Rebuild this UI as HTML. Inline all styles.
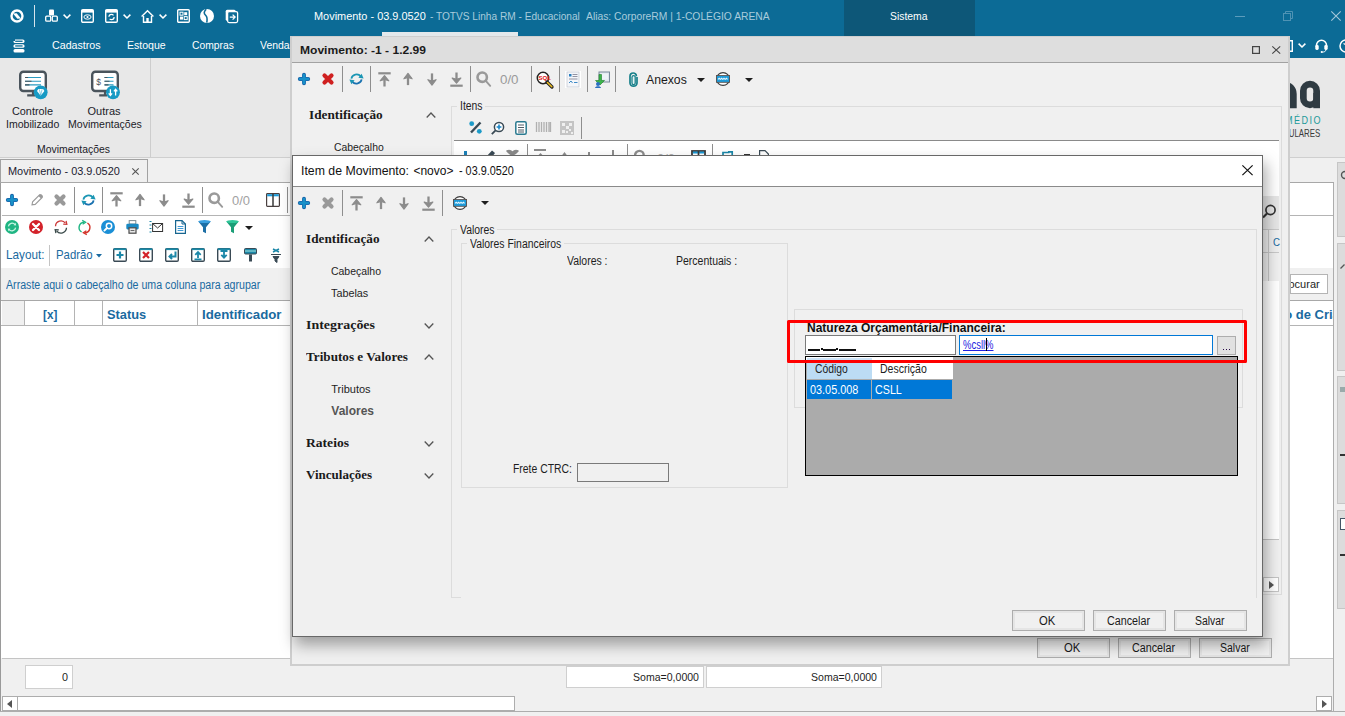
<!DOCTYPE html>
<html><head><meta charset="utf-8"><title>Movimento</title>
<style>
*{box-sizing:border-box;margin:0;padding:0}
html,body{width:1345px;height:716px;overflow:hidden;background:#f0f0f0;font-family:"Liberation Sans",sans-serif;}
body{position:relative}
.a{position:absolute}
.t{position:absolute;white-space:nowrap;transform-origin:0 50%;line-height:16px;height:16px;font-family:"Liberation Sans",sans-serif;}
svg{position:absolute;overflow:visible}
.sep{position:absolute;width:1px;background:#8e8e8e}
.btn{position:absolute;border:1px solid #adadad;background:#f0f0f0;box-shadow:inset 0 0 0 2px #e5e5e5}
.gb{position:absolute;border:1px solid #dcdcdc}
</style></head><body>
<div class="a" style="left:0px;top:0px;width:1345px;height:58px;background:#0c6b96;"></div><div class="a" style="left:844px;top:0px;width:131px;height:36px;background:#0d5778;"></div><div class="a" style="left:382px;top:32px;width:136px;height:4px;background:#e4e9ec;"></div><svg style="left:10px;top:9px" width="14" height="14" viewBox="0 0 14 14"><circle cx="7" cy="7" r="5.500" fill="none" stroke="#fff" stroke-width="2.400"/><path d="M3 4.600l3.600-0.400 4.400 5.200-3.600 0.400z" fill="#fff"/></svg><div class="sep" style="left:34px;top:5px;height:22px;background:#d6e4ec"></div><svg style="left:45px;top:9px" width="13" height="13" viewBox="0 0 13 13"><rect x="4" y="0.5" width="5" height="6" rx="1" fill="#fff"/><rect x="0.7" y="7.2" width="5" height="5" rx="1" fill="none" stroke="#fff" stroke-width="1.3"/><rect x="7.3" y="7.2" width="5" height="5" rx="1" fill="none" stroke="#fff" stroke-width="1.3"/></svg><svg style="left:62.5px;top:13.5px" width="8" height="5" viewBox="0 0 8 5"><path d="M0.6 0.6L4 4l3.4-3.4" fill="none" stroke="#fff" stroke-width="1.5"/></svg><svg style="left:81px;top:9px" width="13" height="14" viewBox="0 0 13 14"><rect x="0.7" y="0.7" width="11.6" height="12.6" rx="1.2" fill="none" stroke="#fff" stroke-width="1.4"/><path d="M0.700 2.200h11.600" stroke="#fff" stroke-width="2.800"/><ellipse cx="6.5" cy="8" rx="3.6" ry="2.2" fill="none" stroke="#fff" stroke-width="1"/><circle cx="6.5" cy="8" r="1.1" fill="#fff"/></svg><svg style="left:105px;top:9px" width="13" height="14" viewBox="0 0 13 14"><rect x="0.7" y="0.7" width="11.6" height="12.6" rx="1.2" fill="none" stroke="#fff" stroke-width="1.4"/><path d="M0.700 2.200h11.600" stroke="#fff" stroke-width="2.800"/><circle cx="6.5" cy="8" r="2.6" fill="none" stroke="#fff" stroke-width="1.2" stroke-dasharray="6 2.2"/></svg><svg style="left:122.5px;top:13.5px" width="8" height="5" viewBox="0 0 8 5"><path d="M0.6 0.6L4 4l3.4-3.4" fill="none" stroke="#fff" stroke-width="1.5"/></svg><svg style="left:141px;top:9.5px" width="13" height="13" viewBox="0 0 13 13"><path d="M0.6 6.6L6.5 0.8l5.9 5.8" fill="none" stroke="#fff" stroke-width="1.4"/><path d="M2.5 6v6.3h8V6" fill="none" stroke="#fff" stroke-width="1.4"/><rect x="5.3" y="8" width="2.4" height="4.3" fill="#fff"/></svg><svg style="left:158.8px;top:13.5px" width="8" height="5" viewBox="0 0 8 5"><path d="M0.6 0.6L4 4l3.4-3.4" fill="none" stroke="#fff" stroke-width="1.5"/></svg><svg style="left:177px;top:9px" width="13" height="14" viewBox="0 0 13 14"><rect x="0.7" y="0.7" width="11.6" height="12.6" rx="1" fill="none" stroke="#fff" stroke-width="1.4"/><rect x="3" y="3.2" width="3" height="3" fill="none" stroke="#fff" stroke-width="1"/><rect x="7.2" y="3.2" width="3" height="3" fill="#fff"/><rect x="3" y="7.6" width="3" height="3" fill="#fff"/><rect x="7.2" y="7.6" width="3" height="3" fill="none" stroke="#fff" stroke-width="1"/></svg><svg style="left:200px;top:9px" width="14" height="14" viewBox="0 0 14 14"><circle cx="7" cy="7" r="7" fill="#fff"/><path d="M6.2 0.3c-2.5 2.5-2.6 4.2-0.4 6.2 1.6 1.4 1.6 3.6 1 7.2" fill="none" stroke="#0c6b96" stroke-width="1.6"/></svg><svg style="left:225px;top:9px" width="13" height="14" viewBox="0 0 13 14"><rect x="0.7" y="0.7" width="10" height="11" rx="1.5" fill="#fff"/><rect x="2.6" y="2.6" width="10" height="11" rx="1.5" fill="#0c6b96" stroke="#fff" stroke-width="1.3"/><path d="M4.8 8.1h5M7.6 5.6l2.5 2.5-2.5 2.5" fill="none" stroke="#fff" stroke-width="1.3"/></svg><span class="t" style="left:313.75px;top:7.50px;font-size:11px;color:#fff;transform:scaleX(0.9932);">Movimento - 03.9.0520</span><span class="t" style="left:429.50px;top:7.50px;font-size:11px;color:#a9cbdc;transform:scaleX(0.9199);">- TOTVS Linha RM - Educacional</span><span class="t" style="left:586.30px;top:7.50px;font-size:11px;color:#a9cbdc;transform:scaleX(0.9371);">Alias: CorporeRM | 1-COLÉGIO ARENA</span><span class="t" style="left:890.00px;top:7.60px;font-size:11px;color:#fff;transform:scaleX(0.9434);">Sistema</span><svg style="left:1235px;top:15.5px" width="10" height="1" viewBox="0 0 10 1"><rect width="10" height="1" fill="#5c9cbc"/></svg><svg style="left:1283px;top:11px" width="10" height="10" viewBox="0 0 10 10"><rect x="0.5" y="2.5" width="7" height="7" fill="none" stroke="#4f93b4" stroke-width="1"/><path d="M2.5 2.5v-2h7v7h-2" fill="none" stroke="#4f93b4" stroke-width="1"/></svg><svg style="left:1331px;top:11px" width="10" height="10" viewBox="0 0 10 10"><path d="M0.3 0.3l9.4 9.4M9.7 0.3L0.3 9.7" stroke="#a5c7d9" stroke-width="1.1"/></svg><svg style="left:13px;top:39px" width="12" height="14" viewBox="0 0 12 14"><rect x="0.5" y="0.5" width="11" height="3.6" rx="1.6" fill="#fff"/><rect x="0.5" y="5.2" width="11" height="3.6" rx="1.6" fill="#fff"/><rect x="0.5" y="9.9" width="11" height="3.6" rx="1.6" fill="#fff"/><rect x="2.2" y="1.6" width="7.4" height="1.3" fill="#0c6b96"/><rect x="2.2" y="6.3" width="7.4" height="1.3" fill="#0c6b96"/><rect x="0" y="0" width="2" height="2" fill="#0c6b96"/></svg><span class="t" style="left:52.00px;top:37.30px;font-size:11px;color:#fff;transform:scaleX(0.9693);">Cadastros</span><span class="t" style="left:126.50px;top:37.30px;font-size:11px;color:#fff;transform:scaleX(0.9585);">Estoque</span><span class="t" style="left:192.00px;top:37.30px;font-size:11px;color:#fff;transform:scaleX(0.9367);">Compras</span><span class="t" style="left:260.00px;top:37.30px;font-size:11px;color:#fff;transform:scaleX(0.9481);">Vendas</span><svg style="left:1289px;top:40px" width="5" height="12" viewBox="0 0 5 12"><path d="M0 0.7h3.3v10.6H0" fill="none" stroke="#fff" stroke-width="1.4"/></svg><svg style="left:1297.5px;top:43px" width="8" height="5" viewBox="0 0 8 5"><path d="M0.6 0.6L4 4l3.4-3.4" fill="none" stroke="#fff" stroke-width="1.5"/></svg><svg style="left:1315px;top:38.5px" width="13" height="14" viewBox="0 0 13 14"><path d="M1.5 8V6.3a5 5 0 0 1 10 0V8" fill="none" stroke="#fff" stroke-width="1.6"/><rect x="0.3" y="6" width="3.4" height="5" rx="1.4" fill="#fff"/><rect x="9.3" y="6" width="3.4" height="5" rx="1.4" fill="#fff"/><path d="M11 10.5c0 2-2 2.6-4 2.6" fill="none" stroke="#fff" stroke-width="1"/><circle cx="6.7" cy="13" r="1" fill="#fff"/></svg><svg style="left:1339px;top:38.5px" width="14" height="14" viewBox="0 0 14 14"><circle cx="7" cy="7" r="6" fill="none" stroke="#fff" stroke-width="1.5"/><path d="M4.5 4.5l2 1" stroke="#fff" stroke-width="1.2"/></svg><div class="a" style="left:0px;top:58px;width:1345px;height:99px;background:#e8e8e8;"></div><div class="a" style="left:0px;top:157px;width:1345px;height:1px;background:#cfcfcf;"></div><div class="sep" style="left:150px;top:58px;height:99px;background:#cdcdcd"></div><svg style="left:19px;top:69.5px" width="31" height="31" viewBox="0 0 31 31"><rect x="1.200" y="1.700" width="25.600" height="19.300" rx="3.200" fill="#fff" stroke="#4a545c" stroke-width="2.400"/><path d="M14 21.500v3.600M8.200 25.400h8" stroke="#4a545c" stroke-width="2.200"/><path d="M6 7.500h16M6 11.200h16M6 14.900h16" stroke="#2a9ac0" stroke-width="1.100"/><path d="M6 7.500h3M6 11.200h6.500M6 14.900h4.500" stroke="#4a545c" stroke-width="1.100"/><circle cx="21.700" cy="22.300" r="6.900" fill="#169ac4"/><path d="M18 21h7.400l-3.700 4.800z" fill="#fff"/><path d="M18 21l1.300-1.900h4.800l1.300 1.900z" fill="#fff"/><path d="M20.300 19.300l1.400 6M23.100 19.300l-1.400 6" stroke="#169ac4" stroke-width="0.500"/></svg><svg style="left:90.7px;top:69.5px" width="31" height="31" viewBox="0 0 31 31"><rect x="1.200" y="1.700" width="25.600" height="19.300" rx="3.200" fill="#fff" stroke="#4a545c" stroke-width="2.400"/><path d="M14 21.500v3.600M8.200 25.400h8" stroke="#4a545c" stroke-width="2.200"/><path d="M13.500 7.500h9M13.500 11.200h9M13.500 14.900h9" stroke="#2a9ac0" stroke-width="1.100"/><path d="M13.500 7.500h3M13.500 11.200h5M13.500 14.900h4" stroke="#4a545c" stroke-width="1.100"/><text x="5.300" y="14.500" font-family="Liberation Sans" font-size="8.500" fill="#4a545c">$</text><circle cx="22" cy="22.300" r="6.900" fill="#169ac4"/><path d="M19.400 19.300v6M17.700 23.400l1.700 2 1.700-2M24.600 25.400v-6M22.900 21.300l1.700-2 1.700 2" fill="none" stroke="#fff" stroke-width="1.300"/></svg><span class="t" style="left:12.00px;top:103.30px;font-size:11px;color:#1c1c28;transform:scaleX(0.9861);">Controle</span><span class="t" style="left:6.00px;top:116.30px;font-size:11px;color:#1c1c28;transform:scaleX(0.9579);">Imobilizado</span><span class="t" style="left:87.50px;top:103.30px;font-size:11px;color:#1c1c28;">Outras</span><span class="t" style="left:67.50px;top:116.30px;font-size:11px;color:#1c1c28;transform:scaleX(0.9579);">Movimentações</span><span class="t" style="left:37.00px;top:141.30px;font-size:11px;color:#1c1c28;transform:scaleX(0.9475);">Movimentações</span><svg style="left:1260px;top:75px" width="70" height="40" viewBox="0 0 70 40"><path d="M15 33.200V19a9.100 9.100 0 0 1 18.200 0V33.200" fill="none" stroke="#2f3b42" stroke-width="7"/><rect x="43.350" y="9.150" width="13.300" height="20.700" rx="6.650" fill="none" stroke="#2f3b42" stroke-width="6.700"/><rect x="53.300" y="18" width="6.700" height="15.200" fill="#2f3b42"/></svg><span class="t" style="left:1284.50px;top:111.60px;font-size:11px;color:#1a9a9a;transform:scaleX(0.8211);letter-spacing:1.800px;">MÉDIO</span><span class="t" style="left:1283.00px;top:124.50px;font-size:10.5px;color:#3a3a3a;transform:scaleX(0.7519);">CULARES</span><div class="a" style="left:0px;top:158px;width:1345px;height:25px;background:#f0f0f0;"></div><div class="a" style="left:0px;top:159px;width:148px;height:24px;background:#f0f0f0;border:1.300px solid #a2a2a2;border-bottom:none;"></div><div class="a" style="left:0px;top:182px;width:1334px;height:1.6px;background:#a8a8a8;"></div><span class="t" style="left:7.50px;top:163.00px;font-size:11px;color:#1c1c30;transform:scaleX(0.9936);">Movimento - 03.9.0520</span><svg style="left:131.5px;top:167.8px" width="7" height="7" viewBox="0 0 7 7"><path d="M0.300 0.300l6.400 6.400M6.700 0.300L0.300 6.700" stroke="#555" stroke-width="1.100"/></svg><div class="a" style="left:0px;top:183px;width:1334px;height:475px;background:#fff;"></div><div class="a" style="left:0px;top:183px;width:1.3px;height:528px;background:#9a9a9a;"></div><div class="a" style="left:1333px;top:183px;width:1px;height:529px;background:#adadad;"></div><svg style="left:6px;top:194px" width="12" height="12" viewBox="0 0 12 12"><path d="M6 1.800v8.400M1.800 6h8.400" stroke="#1a62a8" stroke-width="3.900" stroke-linecap="round"/><path d="M6 2v8M2 6h8" stroke="#1890c8" stroke-width="2.700" stroke-linecap="round"/></svg><svg style="left:30.5px;top:193px" width="13" height="13" viewBox="0 0 13 13"><path d="M1 11.800l0.600-3L8.600 1.800l2.600 2.600-7 7z" fill="#fff" stroke="#9a9a9a" stroke-width="1.100"/><path d="M7.400 3l2.600 2.600 1.800-1.800a0.800 0.800 0 0 0 0-1.100L10.300 1.200a0.800 0.800 0 0 0-1.100 0z" fill="#9a9a9a"/></svg><svg style="left:54px;top:194px" width="12" height="12" viewBox="0 0 12 12"><path d="M2.500 2.500l7 7M9.500 2.500l-7 7" stroke="#999999" stroke-width="4.200" stroke-linecap="round"/></svg><div class="sep" style="left:74px;top:187px;height:26px;background:#8e8e8e"></div><svg style="left:80.5px;top:194px" width="15" height="12" viewBox="0 0 15 12"><path d="M2.400 5.600A5.200 4.600 0 0 1 11.800 3.400" fill="none" stroke="#1b96b4" stroke-width="1.700"/><path d="M12.600 6.400A5.200 4.600 0 0 1 3.200 8.600" fill="none" stroke="#1a72b0" stroke-width="1.700"/><path d="M9.400 4.800l5.200 0.600-2-4.600z" fill="#1b96b4"/><path d="M5.600 7.200l-5.200-0.600 2 4.600z" fill="#1b96b4"/></svg><div class="sep" style="left:102px;top:187px;height:26px;background:#8e8e8e"></div><svg style="left:109.5px;top:192px" width="13" height="15" viewBox="0 0 13 15"><path d="M0.300 1.300h12.400" stroke="#8c8c8c" stroke-width="2.200"/><path d="M6.500 6v8.500" stroke="#8c8c8c" stroke-width="2.300"/><path d="M6.500 3.600l4.300 5.200-4.300-1.300-4.300 1.300z" fill="#8c8c8c" stroke="#8c8c8c" stroke-width="1.200" stroke-linejoin="round"/></svg><svg style="left:135.3px;top:192.5px" width="10" height="15" viewBox="0 0 10 15"><path d="M5 3.500v9.600" stroke="#8c8c8c" stroke-width="2.300"/><path d="M5 1.400l4.100 5.400-4.100-1.400-4.100 1.400z" fill="#8c8c8c" stroke="#8c8c8c" stroke-width="1.200" stroke-linejoin="round"/></svg><svg style="left:158.7px;top:193px" width="10" height="15" viewBox="0 0 10 15"><path d="M5 1.400v9.600" stroke="#8c8c8c" stroke-width="2.300"/><path d="M5 13.100l4.100-5.400-4.100 1.400-4.100-1.400z" fill="#8c8c8c" stroke="#8c8c8c" stroke-width="1.200" stroke-linejoin="round"/></svg><svg style="left:181.7px;top:193px" width="13" height="15" viewBox="0 0 13 15"><path d="M0.300 13.700h12.400" stroke="#8c8c8c" stroke-width="2.200"/><path d="M6.500 0.500v8.500" stroke="#8c8c8c" stroke-width="2.300"/><path d="M6.500 11.200l4.300-5.200-4.300 1.300-4.300-1.300z" fill="#8c8c8c" stroke="#8c8c8c" stroke-width="1.200" stroke-linejoin="round"/></svg><div class="sep" style="left:202px;top:187px;height:26px;background:#8e8e8e"></div><svg style="left:208.3px;top:192px" width="15" height="16" viewBox="0 0 15 16"><circle cx="6.200" cy="6.200" r="4.700" fill="none" stroke="#9a9a9a" stroke-width="2.600"/><path d="M9.800 9.800l4.400 5" stroke="#9a9a9a" stroke-width="1.900" stroke-linecap="round"/></svg><span class="t" style="left:232.00px;top:193.30px;font-size:13.5px;color:#a2a2a2;transform:scaleX(0.9584);">0/0</span><svg style="left:266px;top:193px" width="14" height="14" viewBox="0 0 14 14"><rect x="0.600" y="0.600" width="12.800" height="12.800" rx="0.800" fill="#fff" stroke="#4a4040" stroke-width="1.200"/><rect x="1.200" y="1.200" width="11.600" height="2.100" fill="#1b9ad8"/><path d="M7 0.600v12.800" stroke="#3a3a3a" stroke-width="1.500"/></svg><div class="sep" style="left:287px;top:187px;height:26px;background:#8e8e8e"></div><div class="a" style="left:2px;top:215px;width:1331px;height:1px;background:#b4b4b4;"></div><svg style="left:5px;top:220.3px" width="14" height="14" viewBox="0 0 14 14"><circle cx="7" cy="7" r="7" fill="#1fb583"/><path d="M3.4 6.4A3.7 3.7 0 0 1 10 4.6M10.6 7.6A3.7 3.7 0 0 1 4 9.4" fill="none" stroke="#c8f5e4" stroke-width="1.3"/><path d="M8.6 5.2l2.6 0.2-0.6-2.6zM5.4 8.8l-2.6-0.2 0.6 2.6z" fill="#c8f5e4"/></svg><svg style="left:28.8px;top:220.3px" width="14" height="14" viewBox="0 0 14 14"><circle cx="7" cy="7" r="7" fill="#d3222a"/><path d="M4 4l6 6M10 4l-6 6" stroke="#fff" stroke-width="2.3" stroke-linecap="round"/></svg><svg style="left:54px;top:220.3px" width="14" height="14" viewBox="0 0 14 14"><path d="M1.500 6.200A5.500 5.500 0 0 1 11.400 3.200" fill="none" stroke="#cc3a3a" stroke-width="1.300"/><path d="M12.500 7.800A5.500 5.500 0 0 1 2.600 10.800" fill="none" stroke="#3a4a4a" stroke-width="1.300"/><path d="M9.200 4.200l3.600 0.200-0.700-3.500" fill="none" stroke="#cc3a3a" stroke-width="1.300"/><path d="M4.800 9.800l-3.600-0.200 0.700 3.500" fill="none" stroke="#3a4a4a" stroke-width="1.300"/></svg><svg style="left:77.5px;top:219.8px" width="13" height="15" viewBox="0 0 13 15"><path d="M6 2.200A5.300 5.300 0 0 0 3.600 12" fill="none" stroke="#1fb583" stroke-width="1.400"/><path d="M7 12.800A5.300 5.300 0 0 0 9.400 3" fill="none" stroke="#d3342a" stroke-width="1.400"/><path d="M4.200 0.400l3.400 1.800-3 2" fill="none" stroke="#1fb583" stroke-width="1.300"/><path d="M8.800 14.600l-3.400-1.800 3-2" fill="none" stroke="#d3342a" stroke-width="1.300"/></svg><svg style="left:100.8px;top:220.3px" width="14" height="14" viewBox="0 0 14 14"><circle cx="7" cy="7" r="7" fill="#1a8fd6"/><circle cx="8" cy="6" r="2.7" fill="none" stroke="#fff" stroke-width="1.5"/><path d="M6 8l-2.600 2.600" stroke="#fff" stroke-width="1.900" stroke-linecap="round"/></svg><svg style="left:125.5px;top:220.3px" width="13" height="14" viewBox="0 0 13 14"><rect x="3.200" y="0.600" width="6.600" height="3.400" fill="#fff" stroke="#7a8a92" stroke-width="1"/><rect x="0.300" y="3.800" width="12.400" height="5.600" rx="1.300" fill="#1a8ac4"/><rect x="3" y="7.800" width="7" height="5.400" fill="#e8e8e8" stroke="#4a4a4a" stroke-width="1.200"/><path d="M4.600 10.500h3.800" stroke="#4a4a4a" stroke-width="0.800"/></svg><svg style="left:148.8px;top:221.3px" width="14" height="12" viewBox="0 0 14 12"><rect x="3.600" y="2.500" width="10" height="8" fill="#fff" stroke="#333" stroke-width="1"/><path d="M3.600 2.500l5 4.500 5-4.500" fill="none" stroke="#333" stroke-width="1"/><path d="M0.500 0.500h2M0.500 4h2M0.500 7.500h2M0.500 11h2" stroke="#1b87a8" stroke-width="1"/></svg><svg style="left:174.5px;top:220.3px" width="11" height="14" viewBox="0 0 11 14"><path d="M0.600 0.600h6.400l3.400 3.400v9.400H0.600z" fill="#fff" stroke="#17658f" stroke-width="1.200"/><path d="M7 0.600v3.400h3.400" fill="none" stroke="#17658f" stroke-width="1"/><path d="M2.600 6.500h5.800M2.600 8.500h5.800M2.600 10.500h5.800" stroke="#2a8fd0" stroke-width="0.900"/></svg><svg style="left:197.5px;top:220.3px" width="13" height="14" viewBox="0 0 13 14"><path d="M0.300 1.500h12.400L8 7.300v6l-3-1.500V7.300z" fill="#1d6fa5"/><ellipse cx="6.500" cy="1.600" rx="6.200" ry="1.500" fill="#3aa0e0"/></svg><svg style="left:225.5px;top:220.3px" width="13" height="14" viewBox="0 0 13 14"><path d="M0.300 1.500h12.400L8 7.300v6l-3-1.500V7.300z" fill="#1b9e77"/><ellipse cx="6.500" cy="1.600" rx="6.200" ry="1.500" fill="#2fc79a"/></svg><svg style="left:245px;top:225.8px" width="8" height="4" viewBox="0 0 8 4"><path d="M0 0h8L4 4z" fill="#1e1e1e"/></svg><span class="t" style="left:5.50px;top:247.30px;font-size:13px;color:#1a6aa0;transform:scaleX(0.9026);">Layout:</span><div class="sep" style="left:49px;top:245px;height:21px;background:#c4c4c4"></div><span class="t" style="left:56.00px;top:247.30px;font-size:13px;color:#1a6aa0;transform:scaleX(0.8754);">Padrão</span><svg style="left:96px;top:253.5px" width="6" height="3.5" viewBox="0 0 6 3.5"><path d="M0 0h6L3 3.500z" fill="#1a6aa0"/></svg><svg style="left:113px;top:248px" width="14" height="14" viewBox="0 0 14 14"><rect x="0.700" y="0.700" width="12.600" height="12.600" rx="1.200" fill="#fff" stroke="#3a4a55" stroke-width="1.400"/><path d="M0.700 1.200h12.600" stroke="#1b8aa8" stroke-width="1.800"/><path d="M7 3.500v7M3.500 7h7" stroke="#1b87a8" stroke-width="2.200"/></svg><svg style="left:139px;top:248px" width="14" height="14" viewBox="0 0 14 14"><rect x="0.700" y="0.700" width="12.600" height="12.600" rx="1.200" fill="#fff" stroke="#3a4a55" stroke-width="1.400"/><path d="M0.700 1.200h12.600" stroke="#1b8aa8" stroke-width="1.800"/><path d="M4 4l6 6M10 4l-6 6" stroke="#d3222a" stroke-width="2.200"/></svg><svg style="left:165px;top:248px" width="14" height="14" viewBox="0 0 14 14"><rect x="0.700" y="0.700" width="12.600" height="12.600" rx="1.200" fill="#fff" stroke="#3a4a55" stroke-width="1.400"/><path d="M0.700 1.200h12.600" stroke="#1b8aa8" stroke-width="1.800"/><path d="M10.500 3.500v5H5M7 6l-2.500 2.500L7 11" fill="none" stroke="#1b87a8" stroke-width="2"/></svg><svg style="left:191px;top:248px" width="14" height="14" viewBox="0 0 14 14"><rect x="0.700" y="0.700" width="12.600" height="12.600" rx="1.200" fill="#fff" stroke="#3a4a55" stroke-width="1.400"/><path d="M0.700 1.200h12.600" stroke="#1b8aa8" stroke-width="1.800"/><path d="M7 10V4.500M4.300 6.800L7 4l2.700 2.800M3.500 11.300h7" fill="none" stroke="#1b87a8" stroke-width="1.800"/></svg><svg style="left:217px;top:248px" width="14" height="14" viewBox="0 0 14 14"><rect x="0.700" y="0.700" width="12.600" height="12.600" rx="1.200" fill="#fff" stroke="#3a4a55" stroke-width="1.400"/><path d="M0.700 1.200h12.600" stroke="#1b8aa8" stroke-width="1.800"/><path d="M7 3.500V9M4.300 6.800L7 9.600l2.700-2.800M3.500 3h7" fill="none" stroke="#1b87a8" stroke-width="1.800"/></svg><svg style="left:243.5px;top:248px" width="13" height="14" viewBox="0 0 13 14"><rect x="0.500" y="0.500" width="12" height="5.500" rx="1" fill="#1b87a8" stroke="#3a4a55" stroke-width="1"/><path d="M1 3h11" stroke="#cfe" stroke-width="0.800"/><rect x="5" y="6.500" width="3" height="7" fill="#3a4a55"/></svg><svg style="left:271px;top:247.5px" width="10" height="15" viewBox="0 0 10 15"><path d="M2 1l6 3M8 1L2 4" stroke="#1b87a8" stroke-width="1.600"/><path d="M0 6.500h10M2 8.500h6l-2 3v3l-2-1.500v-1.500z" fill="#3a4a55" stroke="#3a4a55" stroke-width="1"/></svg><div class="a" style="left:1px;top:268px;width:1332px;height:32px;background:#f0f0f0;"></div><span class="t" style="left:6.00px;top:277.30px;font-size:12px;color:#1a6aa0;transform:scaleX(0.8865);">Arraste aqui o cabeçalho de uma coluna para agrupar</span><div class="a" style="left:1px;top:300px;width:1332px;height:1px;background:#a8a8a8;"></div><div class="a" style="left:1px;top:325px;width:1332px;height:1px;background:#b4b4b4;"></div><div class="a" style="left:2px;top:301px;width:22px;height:24px;background:#f0f0f0;"></div><div class="sep" style="left:24px;top:301px;height:24px;background:#b4b4b4"></div><div class="sep" style="left:74px;top:301px;height:24px;background:#b4b4b4"></div><div class="sep" style="left:102px;top:301px;height:24px;background:#b4b4b4"></div><div class="sep" style="left:197px;top:301px;height:24px;background:#b4b4b4"></div><span class="t" style="left:43.00px;top:307.30px;font-size:13px;font-weight:700;color:#1a6aa0;transform:scaleX(0.8999);">[x]</span><span class="t" style="left:106.80px;top:307.30px;font-size:13px;font-weight:700;color:#1a6aa0;transform:scaleX(0.9866);">Status</span><span class="t" style="left:202.00px;top:307.30px;font-size:13px;font-weight:700;color:#1a6aa0;transform:scaleX(1.0190);">Identificador</span><div class="a" style="left:1290px;top:301px;width:43px;height:24px;overflow:hidden"><span class="t" style="left:-13.00px;top:6.30px;font-size:13px;font-weight:700;color:#1a6aa0;">ão de Criação</span></div><div class="a" style="left:1290px;top:274px;width:38px;height:19.5px;background:#fff;border:1px solid #b4b4b4;"></div><div class="a" style="left:1291px;top:275px;width:36px;height:18px;overflow:hidden"><span class="t" style="left:-13.50px;top:1.30px;font-size:11px;color:#1e1e1e;">Procurar</span></div><div class="a" style="left:2px;top:658px;width:1331px;height:1px;background:#c4c4c4;"></div><div class="a" style="left:2px;top:659px;width:1331px;height:52px;background:#f0f0f0;"></div><div class="a" style="left:25px;top:665px;width:48px;height:24px;background:#fff;border:1px solid #cfcfcf;"></div><span class="t" style="left:62.00px;top:669.00px;font-size:11px;color:#1e1e1e;transform:scaleX(0.9796);">0</span><div class="a" style="left:566px;top:666px;width:138px;height:22px;background:#fff;border:1px solid #cfcfcf;"></div><div class="a" style="left:706px;top:666px;width:176px;height:22px;background:#fff;border:1px solid #cfcfcf;"></div><span class="t" style="left:633.00px;top:669.00px;font-size:11px;color:#1e1e1e;transform:scaleX(0.9591);">Soma=0,0000</span><span class="t" style="left:811.00px;top:669.00px;font-size:11px;color:#1e1e1e;transform:scaleX(0.9591);">Soma=0,0000</span><div class="a" style="left:2px;top:696px;width:1331px;height:15px;background:#f0f0f0;"></div><div class="a" style="left:2px;top:696px;width:16px;height:15px;background:#fff;border:1px solid #adadad;"></div><svg style="left:7px;top:700px" width="5" height="8" viewBox="0 0 5 8"><path d="M5 0v8L0 4z" fill="#555"/></svg><div class="a" style="left:17px;top:696px;width:498px;height:15px;background:#fff;border:1px solid #adadad;"></div><div class="a" style="left:1316px;top:696px;width:16px;height:15px;background:#fff;border:1px solid #adadad;"></div><svg style="left:1322px;top:700px" width="5" height="8" viewBox="0 0 5 8"><path d="M0 0v8l5-4z" fill="#555"/></svg><div class="a" style="left:0px;top:711px;width:1345px;height:1px;background:#adadad;"></div><div class="a" style="left:1337px;top:162px;width:9px;height:75px;background:#dcdcdc;border:1px solid #c6c6c6;"></div><div class="a" style="left:1337px;top:243px;width:9px;height:128px;background:#dcdcdc;border:1px solid #c6c6c6;"></div><div class="a" style="left:1337px;top:376px;width:9px;height:128px;background:#dcdcdc;border:1px solid #c6c6c6;"></div><div class="a" style="left:1337px;top:509.5px;width:9px;height:99.0px;background:#dcdcdc;border:1px solid #c6c6c6;"></div><svg style="left:1340px;top:170px" width="8" height="10" viewBox="0 0 8 10"><circle cx="5" cy="5" r="3.500" fill="none" stroke="#555" stroke-width="1.400"/></svg><svg style="left:1340px;top:263px" width="6" height="6" viewBox="0 0 6 6"><path d="M0.500 5.500l4-4" stroke="#555" stroke-width="1.200"/></svg><div class="a" style="left:1340px;top:387px;width:5px;height:5px;background:#9aa;"></div><div class="a" style="left:1340px;top:454px;width:5px;height:1.5px;background:#333;"></div><div class="a" style="left:1340px;top:518px;width:6px;height:12px;background:#fff;border:1px solid #456;"></div><div class="a" style="left:1340px;top:554px;width:5px;height:1.5px;background:#333;"></div><div class="a" style="left:290px;top:36px;width:1000px;height:630px;background:#f0f0f0;border:2px solid #cecece;border-top:1px solid #cfcfcf"></div><div class="a" style="left:292px;top:37px;width:996px;height:25px;background:#dedede;"></div><div class="a" style="left:292px;top:61.5px;width:996px;height:1.5px;background:#a2a2a2;"></div><span class="t" style="left:299.50px;top:42.00px;font-size:11px;font-weight:700;color:#1a1a1a;transform:scaleX(1.0964);">Movimento: -1 - 1.2.99</span><svg style="left:1252px;top:46px" width="8" height="8" viewBox="0 0 8 8"><rect x="0.600" y="0.600" width="6.800" height="6.800" fill="none" stroke="#444" stroke-width="1.200"/></svg><svg style="left:1272px;top:46px" width="8.5" height="8" viewBox="0 0 8.5 8"><path d="M0.300 0.300l7.900 7.400M8.200 0.300L0.300 7.700" stroke="#444" stroke-width="1.100"/></svg><svg style="left:298px;top:73px" width="12" height="12" viewBox="0 0 12 12"><path d="M6 1.800v8.400M1.800 6h8.400" stroke="#1a62a8" stroke-width="3.900" stroke-linecap="round"/><path d="M6 2v8M2 6h8" stroke="#1890c8" stroke-width="2.700" stroke-linecap="round"/></svg><svg style="left:321.5px;top:73px" width="12" height="12" viewBox="0 0 12 12"><path d="M2.500 2.500l7 7M9.500 2.500l-7 7" stroke="#cf2020" stroke-width="4.200" stroke-linecap="round"/></svg><div class="sep" style="left:342px;top:66px;height:26px;background:#8e8e8e"></div><svg style="left:348.5px;top:72.5px" width="15" height="12" viewBox="0 0 15 12"><path d="M2.400 5.600A5.200 4.600 0 0 1 11.800 3.400" fill="none" stroke="#1b96b4" stroke-width="1.700"/><path d="M12.600 6.400A5.200 4.600 0 0 1 3.200 8.600" fill="none" stroke="#1a72b0" stroke-width="1.700"/><path d="M9.400 4.800l5.200 0.600-2-4.600z" fill="#1b96b4"/><path d="M5.600 7.200l-5.200-0.600 2 4.600z" fill="#1b96b4"/></svg><div class="sep" style="left:370px;top:66px;height:26px;background:#8e8e8e"></div><svg style="left:378px;top:72px" width="13" height="15" viewBox="0 0 13 15"><path d="M0.300 1.300h12.400" stroke="#8c8c8c" stroke-width="2.200"/><path d="M6.500 6v8.500" stroke="#8c8c8c" stroke-width="2.300"/><path d="M6.500 3.600l4.300 5.200-4.300-1.300-4.300 1.300z" fill="#8c8c8c" stroke="#8c8c8c" stroke-width="1.200" stroke-linejoin="round"/></svg><svg style="left:403.3px;top:72px" width="10" height="15" viewBox="0 0 10 15"><path d="M5 3.500v9.600" stroke="#8c8c8c" stroke-width="2.300"/><path d="M5 1.400l4.100 5.400-4.100-1.400-4.100 1.400z" fill="#8c8c8c" stroke="#8c8c8c" stroke-width="1.200" stroke-linejoin="round"/></svg><svg style="left:427.3px;top:72px" width="10" height="15" viewBox="0 0 10 15"><path d="M5 1.400v9.600" stroke="#8c8c8c" stroke-width="2.300"/><path d="M5 13.100l4.100-5.400-4.100 1.400-4.100-1.400z" fill="#8c8c8c" stroke="#8c8c8c" stroke-width="1.200" stroke-linejoin="round"/></svg><svg style="left:449.5px;top:72px" width="13" height="15" viewBox="0 0 13 15"><path d="M0.300 13.700h12.400" stroke="#8c8c8c" stroke-width="2.200"/><path d="M6.500 0.500v8.500" stroke="#8c8c8c" stroke-width="2.300"/><path d="M6.500 11.200l4.300-5.200-4.300 1.300-4.300-1.300z" fill="#8c8c8c" stroke="#8c8c8c" stroke-width="1.200" stroke-linejoin="round"/></svg><div class="sep" style="left:470px;top:66px;height:26px;background:#8e8e8e"></div><svg style="left:476.3px;top:71.3px" width="15" height="16" viewBox="0 0 15 16"><circle cx="6.200" cy="6.200" r="4.700" fill="none" stroke="#9a9a9a" stroke-width="2.600"/><path d="M9.800 9.800l4.400 5" stroke="#9a9a9a" stroke-width="1.900" stroke-linecap="round"/></svg><span class="t" style="left:499.50px;top:71.50px;font-size:13px;color:#9a9a9a;transform:scaleX(1.0233);">0/0</span><div class="sep" style="left:531px;top:66px;height:26px;background:#8e8e8e"></div><svg style="left:536px;top:71px" width="17" height="17" viewBox="0 0 17 17"><circle cx="7" cy="7" r="5.700" fill="#fff" stroke="#222" stroke-width="1.500"/><text x="2.600" y="9.300" font-family="Liberation Sans" font-weight="700" font-size="6" fill="#e01010">SQL</text><path d="M11 11l5 5" stroke="#222" stroke-width="3.300" stroke-linecap="round"/><path d="M11.500 11.500l4.300 4.300" stroke="#f0c020" stroke-width="1.500" stroke-linecap="round"/></svg><div class="sep" style="left:559px;top:66px;height:26px;background:#8e8e8e"></div><svg style="left:565px;top:71px" width="16" height="17" viewBox="0 0 16 17"><rect x="0" y="0" width="16" height="17" fill="#fff"/><rect x="2" y="1" width="12" height="15" fill="#f4f6fa" stroke="#c8ccd4" stroke-width="0.800"/><rect x="4" y="3" width="2.500" height="2.500" fill="#2a7fc0"/><path d="M7.500 3.500h5M7.500 5.500h5M4 8h8.500" stroke="#889" stroke-width="0.900"/><path d="M4 12l2-2 1.500 2M9 11.500h3.500" stroke="#2a7fc0" stroke-width="0.900" fill="none"/></svg><div class="sep" style="left:587px;top:66px;height:26px;background:#8e8e8e"></div><svg style="left:594px;top:71px" width="16" height="17" viewBox="0 0 16 17"><rect x="5" y="1" width="10.500" height="10" fill="#dfe6ee" stroke="#7a8a9a" stroke-width="1"/><rect x="6.500" y="2.500" width="7.500" height="6" fill="#eef3f8"/><path d="M5 3.500v6l-3.500 0 4.500 4.500 4.500-4.500-3 0V3.500z" fill="#3bb54a" stroke="#1e7a2a" stroke-width="0.600"/><circle cx="4" cy="13" r="2" fill="#2a6fc0"/><path d="M1 17c0-2.500 6-2.500 6 0z" fill="#2a6fc0"/></svg><div class="sep" style="left:615px;top:66px;height:26px;background:#8e8e8e"></div><svg style="left:627.5px;top:71.5px" width="11" height="15" viewBox="0 0 11 15"><path d="M9 5v6a3.500 3.200 0 0 1-7 0V4.200a3.200 3.200 0 0 1 6.400 0" fill="none" stroke="#17808a" stroke-width="1.700"/><path d="M4 11V5.200a1.600 1.600 0 0 1 3.200 0V11a1.600 1.600 0 0 1-3.200 0z" fill="#e6f4f4" stroke="#17808a" stroke-width="1.300"/></svg><span class="t" style="left:645.50px;top:71.50px;font-size:13px;color:#1a1a1a;transform:scaleX(0.9406);">Anexos</span><svg style="left:697px;top:77.5px" width="8" height="4" viewBox="0 0 8 4"><path d="M0 0h8L4 4z" fill="#1e1e1e"/></svg><svg style="left:715.5px;top:72px" width="14" height="14" viewBox="0 0 14 14"><circle cx="7" cy="7" r="6.400" fill="#fff" stroke="#3a3a3a" stroke-width="1.100"/><rect x="0.400" y="3.500" width="13.200" height="6.800" fill="#1e9ad8" stroke="#5a4a44" stroke-width="0.800"/><path d="M2 7.300l1.200-1 1.200 1 1.200-1 1.200 1 1.200-1 1.200 1 1.200-1 1.200 1" fill="none" stroke="#e8f8ff" stroke-width="1.100"/></svg><svg style="left:745px;top:77.5px" width="8" height="4" viewBox="0 0 8 4"><path d="M0 0h8L4 4z" fill="#1e1e1e"/></svg><span class="t" style="left:308.80px;top:107.00px;font-size:12.5px;font-weight:700;color:#1a1a1a;transform:scaleX(1.0614);font-family:'Liberation Serif',serif;">Identificação</span><svg style="left:426px;top:112px" width="10" height="6" viewBox="0 0 10 6"><path d="M0.7 5.5L5 1l4.3 4.5" fill="none" stroke="#555" stroke-width="1.3"/></svg><span class="t" style="left:334.30px;top:138.80px;font-size:11px;color:#1e1e1e;transform:scaleX(0.9450);">Cabeçalho</span><div class="gb" style="left:451px;top:106px;width:831px;height:489px"></div><div class="a" style="left:457px;top:100px;width:28px;height:12px;background:#f0f0f0;"></div><span class="t" style="left:460.00px;top:98.00px;font-size:12px;color:#1e1e1e;transform:scaleX(0.8649);">Itens</span><svg style="left:469px;top:121px" width="13" height="13" viewBox="0 0 13 13"><path d="M2 11.500l9.500-10" stroke="#3a4a55" stroke-width="2.400"/><circle cx="2.700" cy="2.700" r="2.400" fill="#1b9ac8"/><circle cx="10.300" cy="10.300" r="2.400" fill="#1b9ac8"/></svg><svg style="left:491px;top:120.5px" width="14" height="14" viewBox="0 0 14 14"><circle cx="8" cy="6" r="4.600" fill="#fff" stroke="#3a4a55" stroke-width="1.500"/><path d="M8 3.600v4.800M5.600 6h4.800" stroke="#1b87c8" stroke-width="1.600"/><path d="M4.600 9.400L0.800 13.200" stroke="#3a4a55" stroke-width="1.800"/></svg><svg style="left:515px;top:120.5px" width="12" height="14" viewBox="0 0 12 14"><rect x="0.800" y="0.800" width="10.400" height="12.400" rx="1.500" fill="#fff" stroke="#2a7a90" stroke-width="1.500"/><path d="M3 4h6M3 6.500h6M3 9h6M3 11h6" stroke="#3a4a55" stroke-width="0.900"/></svg><svg style="left:536px;top:122px" width="15" height="10" viewBox="0 0 15 10"><path d="M0.500 0v10M3 0v10M5.500 0v10M8 0v10M10.500 0v10M13 0v10M14.500 0v10" stroke="#b0b0b0" stroke-width="1.300"/></svg><svg style="left:560px;top:120.5px" width="14" height="14" viewBox="0 0 14 14"><rect width="14" height="14" fill="#c4c4c4"/><path d="M2 2h3v3H2zM9 2h3v3H9zM2 9h3v3H2zM6 5h3v3H6zM9 8h2v2H9zM6 10h2v2H6zM11 11h2v2h-2z" fill="#efefef"/></svg><div class="sep" style="left:581px;top:117px;height:22px;background:#8e8e8e"></div><div class="a" style="left:454px;top:140px;width:825px;height:453px;background:#fff;border-top:1px solid #8a8a8a;"></div><div class="a" style="left:454px;top:196px;width:825px;height:33px;background:#e6e6e6;"></div><div class="a" style="left:454px;top:229px;width:825px;height:24px;background:#f0f0f0;border-top:1px solid #c9c9c9;border-bottom:1px solid #c9c9c9;"></div><div class="a" style="left:454px;top:253px;width:825px;height:28px;background:#f0f0f0;"></div><div class="a" style="left:454px;top:281px;width:825px;height:258px;background:#fff;"></div><div class="a" style="left:454px;top:539px;width:825px;height:1px;background:#c4c4c4;"></div><div class="a" style="left:454px;top:540px;width:825px;height:53px;background:#f0f0f0;"></div><div class="sep" style="left:1268px;top:229px;height:52px;background:#c9c9c9"></div><span class="t" style="left:1272.50px;top:233.50px;font-size:11px;color:#1a6aa0;transform:scaleX(0.8802);">C</span><svg style="left:1262px;top:204px" width="14" height="15" viewBox="0 0 14 15"><circle cx="8.500" cy="6" r="4.600" fill="none" stroke="#333" stroke-width="1.700"/><path d="M5 9.500L1 13.500" stroke="#333" stroke-width="2.200"/></svg><div class="a" style="left:463.8px;top:150.5px;width:3.4px;height:5px;background:#1b80b8;"></div><svg style="left:484px;top:148.5px" width="12" height="8" viewBox="0 0 12 8"><path d="M2 8L8 1.500l3 2.500L8 8z" fill="#3a4a55"/></svg><svg style="left:505.5px;top:149.5px" width="13" height="7" viewBox="0 0 13 7"><path d="M1 1c2 2.500 4 3.500 5.500 4C8 4.500 10 3.500 12 1c-2-0.800-4-0.300-5.500 1.200C5 0.700 3 0.200 1 1z" fill="#8a8a8a" stroke="#8a8a8a" stroke-width="1.500" stroke-linejoin="round"/></svg><div class="sep" style="left:527px;top:144px;height:12px;background:#8e8e8e"></div><div class="a" style="left:534px;top:148.5px;width:12px;height:2px;background:#8c8c8c;"></div><svg style="left:535.5px;top:151.5px" width="9" height="5" viewBox="0 0 9 5"><path d="M0.800 5L4.500 1l3.700 4z" fill="#8c8c8c"/></svg><svg style="left:560px;top:150.5px" width="9" height="6" viewBox="0 0 9 6"><path d="M0.800 6L4.500 1l3.700 5z" fill="#8c8c8c"/></svg><div class="a" style="left:587.5px;top:151.5px;width:2.2px;height:5px;background:#8c8c8c;"></div><div class="a" style="left:611.5px;top:149.5px;width:2.2px;height:7px;background:#8c8c8c;"></div><div class="sep" style="left:627px;top:144px;height:12px;background:#8e8e8e"></div><svg style="left:633px;top:148.5px" width="13" height="8" viewBox="0 0 13 8"><circle cx="6.400" cy="6.200" r="4.300" fill="none" stroke="#8c8c8c" stroke-width="2.400"/></svg><span class="t" style="left:657.00px;top:151.00px;font-size:13.5px;color:#b0b0b0;transform:scaleX(0.9584);">0/0</span><svg style="left:691px;top:149.5px" width="15" height="7" viewBox="0 0 15 7"><rect x="1" y="1" width="13" height="9" fill="#fff" stroke="#3a3a3a" stroke-width="1.800"/><rect x="1.900" y="1.500" width="11.200" height="2" fill="#1b9ad8"/><path d="M7.500 1v9" stroke="#3a3a3a" stroke-width="1.700"/></svg><div class="sep" style="left:712px;top:144px;height:12px;background:#8e8e8e"></div><svg style="left:722px;top:151px" width="11" height="5" viewBox="0 0 11 5"><path d="M1 5V1.500h6.500M6 0.800h4.200v4.200" fill="none" stroke="#1b87a8" stroke-width="1.700"/></svg><div class="a" style="left:744px;top:153.5px;width:6px;height:1.6px;background:#333;"></div><svg style="left:759px;top:149.5px" width="10" height="7" viewBox="0 0 10 7"><path d="M0.600 7V0.600h5.400l3.400 3.400V7" fill="#fff" stroke="#3a4a55" stroke-width="1.200"/></svg><div class="a" style="left:1263px;top:577px;width:16px;height:15px;background:#fff;border:1px solid #c4c4c4;"></div><svg style="left:1269px;top:580.5px" width="5" height="8" viewBox="0 0 5 8"><path d="M0 0v8l5-4z" fill="#555"/></svg><div class="btn" style="left:1037px;top:637.500px;width:73px;height:20.500px"></div><span class="t" style="left:1064.00px;top:639.80px;font-size:12px;color:#1a1a1a;transform:scaleX(0.9398);">OK</span><div class="btn" style="left:1118px;top:637.500px;width:73px;height:20.500px"></div><span class="t" style="left:1132.30px;top:639.80px;font-size:12px;color:#1a1a1a;transform:scaleX(0.8953);">Cancelar</span><div class="btn" style="left:1199px;top:637.500px;width:73px;height:20.500px"></div><span class="t" style="left:1220.30px;top:639.80px;font-size:12px;color:#1a1a1a;transform:scaleX(0.8731);">Salvar</span><div class="a" style="left:292px;top:155px;width:971px;height:481.500px;background:#f0f0f0;border:1px solid #686868;box-shadow:3px 8px 14px rgba(0,0,0,0.34)"></div><div class="a" style="left:293px;top:156px;width:969px;height:30px;background:#fff;"></div><div class="a" style="left:293px;top:186px;width:969px;height:1px;background:#8a8a8a;"></div><span class="t" style="left:301.00px;top:162.80px;font-size:12px;color:#111;transform:scaleX(1.0249);">Item de Movimento:</span><span class="t" style="left:413.40px;top:162.80px;font-size:12px;color:#111;">&lt;novo&gt;</span><span class="t" style="left:459.00px;top:162.80px;font-size:12px;color:#111;transform:scaleX(0.9025);">- 03.9.0520</span><svg style="left:1241.5px;top:165px" width="11" height="10.5" viewBox="0 0 11 10.5"><path d="M0.400 0.400l10.200 9.700M10.600 0.400L0.400 10.100" stroke="#111" stroke-width="1.200"/></svg><svg style="left:298px;top:196.5px" width="12" height="12" viewBox="0 0 12 12"><path d="M6 1.800v8.400M1.800 6h8.400" stroke="#1a62a8" stroke-width="3.900" stroke-linecap="round"/><path d="M6 2v8M2 6h8" stroke="#1890c8" stroke-width="2.700" stroke-linecap="round"/></svg><svg style="left:322px;top:196.5px" width="12" height="12" viewBox="0 0 12 12"><path d="M2.500 2.500l7 7M9.500 2.500l-7 7" stroke="#999999" stroke-width="4.200" stroke-linecap="round"/></svg><div class="sep" style="left:342px;top:190px;height:26px;background:#8e8e8e"></div><svg style="left:349.5px;top:196px" width="13" height="15" viewBox="0 0 13 15"><path d="M0.300 1.300h12.400" stroke="#8c8c8c" stroke-width="2.200"/><path d="M6.500 6v8.500" stroke="#8c8c8c" stroke-width="2.300"/><path d="M6.500 3.600l4.300 5.200-4.300-1.300-4.300 1.300z" fill="#8c8c8c" stroke="#8c8c8c" stroke-width="1.200" stroke-linejoin="round"/></svg><svg style="left:375.5px;top:196px" width="10" height="15" viewBox="0 0 10 15"><path d="M5 3.500v9.600" stroke="#8c8c8c" stroke-width="2.300"/><path d="M5 1.400l4.100 5.400-4.100-1.400-4.100 1.400z" fill="#8c8c8c" stroke="#8c8c8c" stroke-width="1.200" stroke-linejoin="round"/></svg><svg style="left:399px;top:196px" width="10" height="15" viewBox="0 0 10 15"><path d="M5 1.400v9.600" stroke="#8c8c8c" stroke-width="2.300"/><path d="M5 13.100l4.100-5.400-4.100 1.400-4.100-1.400z" fill="#8c8c8c" stroke="#8c8c8c" stroke-width="1.200" stroke-linejoin="round"/></svg><svg style="left:421.5px;top:196px" width="13" height="15" viewBox="0 0 13 15"><path d="M0.300 13.700h12.400" stroke="#8c8c8c" stroke-width="2.200"/><path d="M6.500 0.500v8.500" stroke="#8c8c8c" stroke-width="2.300"/><path d="M6.500 11.200l4.300-5.200-4.300 1.300-4.300-1.300z" fill="#8c8c8c" stroke="#8c8c8c" stroke-width="1.200" stroke-linejoin="round"/></svg><div class="sep" style="left:442px;top:190px;height:26px;background:#8e8e8e"></div><svg style="left:453.0px;top:196px" width="14" height="14" viewBox="0 0 14 14"><circle cx="7" cy="7" r="6.400" fill="#fff" stroke="#3a3a3a" stroke-width="1.100"/><rect x="0.400" y="3.500" width="13.200" height="6.800" fill="#1e9ad8" stroke="#5a4a44" stroke-width="0.800"/><path d="M2 7.300l1.200-1 1.200 1 1.200-1 1.200 1 1.200-1 1.200 1 1.200-1 1.200 1" fill="none" stroke="#e8f8ff" stroke-width="1.100"/></svg><svg style="left:481.3px;top:201px" width="8" height="4" viewBox="0 0 8 4"><path d="M0 0h8L4 4z" fill="#1e1e1e"/></svg><span class="t" style="left:306.00px;top:231.30px;font-size:12.5px;font-weight:700;color:#1a1a1a;transform:scaleX(1.0585);font-family:'Liberation Serif',serif;">Identificação</span><svg style="left:423.5px;top:236px" width="10" height="6" viewBox="0 0 10 6"><path d="M0.7 5.5L5 1l4.3 4.5" fill="none" stroke="#555" stroke-width="1.3"/></svg><span class="t" style="left:331.30px;top:263.30px;font-size:11px;color:#1e1e1e;transform:scaleX(0.9507);">Cabeçalho</span><span class="t" style="left:331.30px;top:285.30px;font-size:11px;color:#1e1e1e;transform:scaleX(0.9810);">Tabelas</span><span class="t" style="left:306.00px;top:317.30px;font-size:12.5px;font-weight:700;color:#1a1a1a;transform:scaleX(1.1166);font-family:'Liberation Serif',serif;">Integrações</span><svg style="left:423.5px;top:322.5px" width="10" height="6" viewBox="0 0 10 6"><path d="M0.7 0.5L5 5l4.3-4.5" fill="none" stroke="#555" stroke-width="1.3"/></svg><span class="t" style="left:306.00px;top:349.30px;font-size:12.5px;font-weight:700;color:#1a1a1a;transform:scaleX(1.0539);font-family:'Liberation Serif',serif;">Tributos e Valores</span><svg style="left:423.5px;top:354px" width="10" height="6" viewBox="0 0 10 6"><path d="M0.7 5.5L5 1l4.3 4.5" fill="none" stroke="#555" stroke-width="1.3"/></svg><span class="t" style="left:331.30px;top:381.30px;font-size:11px;color:#1e1e1e;">Tributos</span><span class="t" style="left:331.30px;top:403.30px;font-size:12px;font-weight:700;color:#555;">Valores</span><span class="t" style="left:306.00px;top:435.30px;font-size:12.5px;font-weight:700;color:#1a1a1a;transform:scaleX(1.0865);font-family:'Liberation Serif',serif;">Rateios</span><svg style="left:423.5px;top:440.5px" width="10" height="6" viewBox="0 0 10 6"><path d="M0.7 0.5L5 5l4.3-4.5" fill="none" stroke="#555" stroke-width="1.3"/></svg><span class="t" style="left:306.00px;top:467.30px;font-size:12.5px;font-weight:700;color:#1a1a1a;transform:scaleX(1.0407);font-family:'Liberation Serif',serif;">Vinculações</span><svg style="left:423.5px;top:472.5px" width="10" height="6" viewBox="0 0 10 6"><path d="M0.7 0.5L5 5l4.3-4.5" fill="none" stroke="#555" stroke-width="1.3"/></svg><div class="a" style="left:451px;top:229px;width:806px;height:369px;border:1px solid #dcdcdc;border-bottom:none"></div><div class="a" style="left:451px;top:597px;width:10px;height:1px;background:#dcdcdc;"></div><div class="a" style="left:457px;top:223px;width:40px;height:14px;background:#f0f0f0;"></div><span class="t" style="left:460.00px;top:222.30px;font-size:12px;color:#1e1e1e;transform:scaleX(0.8669);">Valores</span><div class="gb" style="left:461px;top:243px;width:327px;height:245px"></div><div class="a" style="left:467px;top:237px;width:97px;height:14px;background:#f0f0f0;"></div><span class="t" style="left:470.00px;top:236.30px;font-size:12px;color:#1e1e1e;transform:scaleX(0.8681);">Valores Financeiros</span><span class="t" style="left:567.00px;top:253.30px;font-size:12px;color:#1e1e1e;transform:scaleX(0.8716);">Valores :</span><span class="t" style="left:676.30px;top:253.30px;font-size:12px;color:#1e1e1e;transform:scaleX(0.8737);">Percentuais :</span><span class="t" style="left:513.00px;top:461.30px;font-size:12px;color:#1e1e1e;transform:scaleX(0.8674);">Frete CTRC:</span><div class="a" style="left:577px;top:462.5px;width:92px;height:19.5px;background:#f0f0f0;border:1px solid #7a7a7a;"></div><div class="gb" style="left:794px;top:309px;width:449px;height:99px"></div><span class="t" style="left:807.00px;top:320.00px;font-size:12px;font-weight:700;color:#111;">Natureza Orçamentária/Financeira:</span><div class="a" style="left:805px;top:335px;width:150.5px;height:20px;background:#fff;border:1px solid #7a7a7a;"></div><div class="a" style="left:808.1px;top:349.2px;width:12.2px;height:1.4px;background:#111;"></div><div class="a" style="left:821px;top:348px;width:1.5px;height:1.5px;background:#111;"></div><div class="a" style="left:823.1px;top:349.2px;width:12.5px;height:1.4px;background:#111;"></div><div class="a" style="left:836.2px;top:348px;width:1.5px;height:1.5px;background:#111;"></div><div class="a" style="left:838.7px;top:349.2px;width:17.1px;height:1.4px;background:#111;"></div><div class="a" style="left:958.5px;top:335px;width:254px;height:20px;background:#fff;border:1px solid #0078d7;"></div><span class="t" style="left:962.50px;top:337.30px;font-size:12px;color:#2020e0;transform:scaleX(0.7887);text-decoration:underline;">%csll%</span><div class="a" style="left:985.5px;top:338px;width:1px;height:13px;background:#000;"></div><div class="a" style="left:1217px;top:336px;width:19px;height:19px;background:#e1e1e1;border:1px solid #adadad;"></div><div class="a" style="left:1223px;top:349px;width:1.3px;height:1.3px;background:#2a0a4a;"></div><div class="a" style="left:1226px;top:349px;width:1.3px;height:1.3px;background:#2a0a4a;"></div><div class="a" style="left:1229px;top:349px;width:1.3px;height:1.3px;background:#2a0a4a;"></div><div class="a" style="left:805px;top:356px;width:432.5px;height:120px;background:#ababab;border:1px solid #000;"></div><div class="a" style="left:807px;top:360px;width:64.5px;height:19px;background:#bcdcf4;"></div><div class="a" style="left:871.5px;top:360px;width:81px;height:19px;background:#fff;"></div><div class="a" style="left:806px;top:357px;width:147px;height:3px;background:#fff;"></div><div class="a" style="left:807px;top:358px;width:64.5px;height:2px;background:#cde3f6;"></div><div class="a" style="left:807px;top:380px;width:64px;height:18.5px;background:#0078d7;"></div><div class="a" style="left:872px;top:380px;width:80px;height:18.5px;background:#0078d7;"></div><span class="t" style="left:814.50px;top:361.30px;font-size:12px;color:#1e1e1e;transform:scaleX(0.8624);">Código</span><span class="t" style="left:879.50px;top:361.30px;font-size:12px;color:#1e1e1e;transform:scaleX(0.8771);">Descrição</span><span class="t" style="left:810.00px;top:381.50px;font-size:12px;color:#fff;transform:scaleX(0.9047);">03.05.008</span><span class="t" style="left:874.50px;top:381.50px;font-size:12px;color:#fff;transform:scaleX(0.8924);">CSLL</span><div class="a" style="left:787px;top:320px;width:460.300px;height:42.700px;border:3px solid #ff0000;border-radius:1.500px"></div><div class="btn" style="left:1012px;top:610px;width:73px;height:21px"></div><span class="t" style="left:1039.00px;top:612.80px;font-size:12px;color:#1a1a1a;transform:scaleX(0.9398);">OK</span><div class="btn" style="left:1093px;top:610px;width:73px;height:21px"></div><span class="t" style="left:1107.30px;top:612.80px;font-size:12px;color:#1a1a1a;transform:scaleX(0.8953);">Cancelar</span><div class="btn" style="left:1174px;top:610px;width:73px;height:21px"></div><span class="t" style="left:1195.30px;top:612.80px;font-size:12px;color:#1a1a1a;transform:scaleX(0.8672);">Salvar</span></body></html>
